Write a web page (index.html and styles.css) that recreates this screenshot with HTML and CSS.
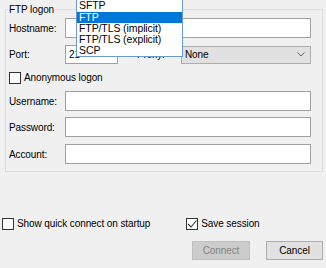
FILE: index.html
```html
<!DOCTYPE html>
<html>
<head>
<meta charset="utf-8">
<link rel="stylesheet" href="styles.css">
</head>
<body>
<fieldset class="group">
  <legend class="legend">FTP logon</legend>
  <div class="row r-host">
    <span class="lbl">Hostname:</span>
    <span class="input"></span>
  </div>
  <div class="row r-port">
    <span class="lbl">Port:</span>
    <span class="input port">21</span>
    <span class="lbl2">Proxy:</span>
    <span class="select">None<svg class="chev" width="8" height="5" viewBox="0 0 8 5"><path d="M0.5 0.5 L4 4 L7.5 0.5" fill="none" stroke="#606060" stroke-width="1"/></svg></span>
  </div>
  <label class="check r-anon"><span class="box"></span><span>Anonymous logon</span></label>
  <div class="row r-user">
    <span class="lbl">Username:</span>
    <span class="input"></span>
  </div>
  <div class="row r-pass">
    <span class="lbl">Password:</span>
    <span class="input"></span>
  </div>
  <div class="row r-acct">
    <span class="lbl">Account:</span>
    <span class="input"></span>
  </div>
</fieldset>
<div class="options">
  <label class="check"><span class="box"></span><span>Show quick connect on startup</span></label>
  <label class="check save"><span class="box checked"><svg width="10" height="10" viewBox="0 0 10 10"><path d="M1 5 L4 8 L9.5 1.5" fill="none" stroke="#333" stroke-width="1.1"/></svg></span><span>Save session</span></label>
</div>
<div class="buttons">
  <span class="btn disabled">Connect</span>
  <span class="btn">Cancel</span>
</div>
<ul class="dropdown">
  <li>SFTP</li>
  <li class="sel">FTP</li>
  <li>FTP/TLS (implicit)</li>
  <li>FTP/TLS (explicit)</li>
  <li>SCP</li>
</ul>
</body>
</html>
```

FILE: styles.css
```css
html, body {
  margin: 0;
  padding: 0;
  background: #f0f0f0;
  font-family: "Liberation Sans", Arial, sans-serif;
  font-size: 10px;
  letter-spacing: -0.1px;
  color: #000;
  width: 326px;
  height: 268px;
  overflow: hidden;
}

body { position: relative; }

.group {
  box-sizing: border-box;
  width: 318px;
  margin: 3px 0 0 5px;
  padding: 2px 11px 7px 3px;
  border: 1px solid #dcdcdc;
}

.legend {
  padding: 0 1px;
  margin-left: -1px;
  line-height: 13px;
}

.row {
  display: flex;
  align-items: center;
}

.lbl {
  width: 56px;
  flex: none;
}

.input {
  box-sizing: border-box;
  flex: 1;
  height: 20px;
  background: #fff;
  border: 1px solid #a0a0a0;
  line-height: 18px;
  padding-left: 3px;
}

.r-port { margin-top: 7px; }
.r-port .input.port {
  flex: none;
  width: 53px;
  height: 19px;
  line-height: 17px;
}
.lbl2 {
  margin-left: 19px;
  width: 44px;
  flex: none;
}
.select {
  box-sizing: border-box;
  flex: 1;
  height: 18px;
  background: #e1e1e1;
  border: 1px solid #adadad;
  line-height: 16px;
  padding-left: 3px;
  display: flex;
  justify-content: space-between;
  align-items: center;
  padding-right: 5px;
}

.check {
  display: flex;
  align-items: center;
  gap: 3px;
  line-height: 12px;
}
.box {
  box-sizing: border-box;
  width: 12px;
  height: 12px;
  border: 1px solid #333;
  background: #fff;
  flex: none;
  display: flex;
  align-items: center;
  justify-content: center;
}

.r-anon { margin-top: 8px; }
.r-user { margin-top: 7px; }
.r-pass { margin-top: 6px; }
.r-acct { margin-top: 7px; }

.dropdown {
  position: absolute;
  left: 76px;
  top: 0;
  width: 107px;
  box-sizing: border-box;
  margin: 0;
  padding: 0;
  list-style: none;
  background: #fff;
  border: 1px solid #6a9ad0;
  border-top: none;
}
.dropdown li {
  height: 11px;
  line-height: 11px;
  padding-left: 2px;
  white-space: nowrap;
  font-size: 10.5px;
}
.dropdown li:first-child {
  height: 12px;
  line-height: 10px;
}
.dropdown li.sel {
  background: #0078d7;
  color: #fff;
}

.options {
  display: flex;
  margin-top: 46px;
  padding-left: 2px;
}
.options .save {
  margin-left: 36px;
}

.buttons {
  display: flex;
  justify-content: flex-end;
  gap: 16px;
  margin-top: 11px;
  padding-right: 3px;
}
.btn {
  box-sizing: border-box;
  width: 57px;
  height: 19px;
  line-height: 17px;
  text-align: center;
  background: #e1e1e1;
  border: 1px solid #adadad;
}
.btn.disabled {
  width: 58px;
  background: #cccccc;
  border-color: #bfbfbf;
  color: #838383;
}
```
